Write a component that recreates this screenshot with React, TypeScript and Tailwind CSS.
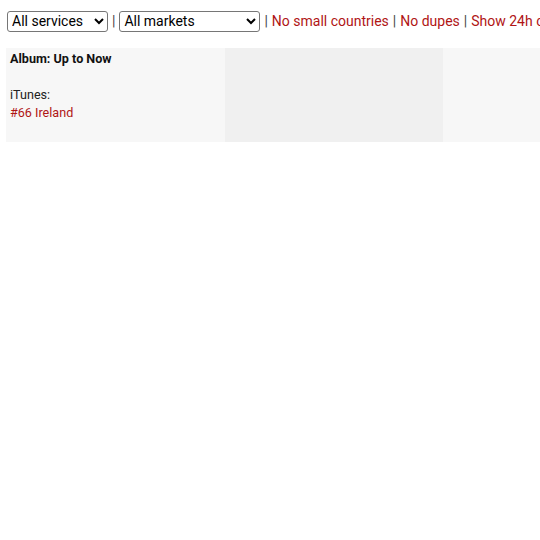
import React from "react";

const links = ["No small countries", "No dupes", "Show 24h changes"];

const Pipe = () => <span className="text-[#444] mx-[4px]">|</span>;

const Filters = () => (
  <div className="flex items-center whitespace-nowrap pl-[7px] pt-[11px] h-[31px] text-[14px] text-black">
    <select className="shrink-0 h-[21px] w-[101px] border border-[#767676] rounded-[3px] bg-white text-[14px]">
      <option>All services</option>
    </select>
    <Pipe />
    <select className="shrink-0 h-[21px] w-[141px] border border-[#767676] rounded-[3px] bg-white text-[14px]">
      <option>All markets</option>
    </select>
    {links.map((l) => (
      <React.Fragment key={l}>
        <Pipe />
        <a href="#" className="shrink-0 text-[#b01515]">
          {l}
        </a>
      </React.Fragment>
    ))}
  </div>
);

const ChartRow = () => (
  <div className="flex mt-[17px] ml-[6px] h-[94px] text-[12.6px] leading-[17.5px]">
    <div className="w-[219px] shrink-0 bg-[#f7f7f7] px-[4px] pt-[2px]">
      <div className="font-bold text-[#111]">Album: Up to Now</div>
      <div className="h-[18.5px]" />
      <div className="text-[#222]">iTunes:</div>
      <a href="#" className="text-[#b01515]">
        #66 Ireland
      </a>
    </div>
    <div className="w-[218px] shrink-0 bg-[#f0f0f0]" />
    <div className="w-[218px] shrink-0 bg-[#f7f7f7]" />
  </div>
);

export default function App() {
  return (
    <div className="w-[540px] h-[540px] overflow-hidden bg-white font-['Roboto',sans-serif]">
      <Filters />
      <ChartRow />
    </div>
  );
}
